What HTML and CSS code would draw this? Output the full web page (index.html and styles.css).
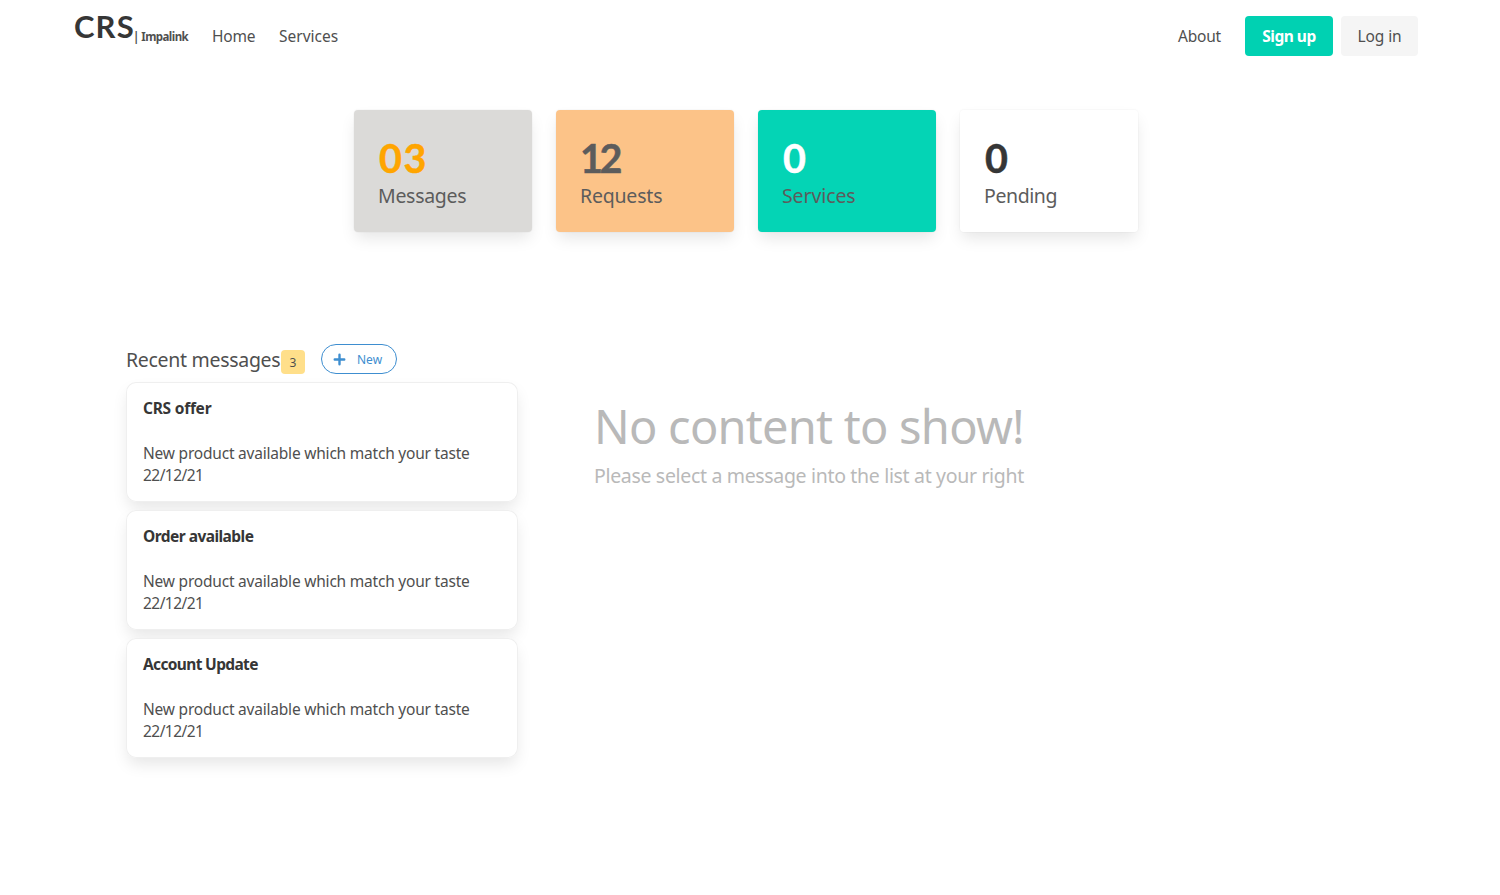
FILE: index.html
```
<!DOCTYPE html>
<html lang="en">
<head>
<meta charset="utf-8">
<title>CRS | Impalink</title>
<link rel="stylesheet" href="styles.css">
</head>
<body>
<nav class="navbar">
  <a class="brand"><span class="brand-name">CRS</span><span class="brand-sub">| Impalink</span></a>
  <a class="link home">Home</a>
  <a class="link services">Services</a>
  <div class="nav-end">
    <a class="link about">About</a>
    <a class="button primary"><span>Sign up</span></a>
    <a class="button light"><span>Log in</span></a>
  </div>
</nav>
<section class="stats">
  <div class="stat grey"><p class="num">03</p><p class="label messages">Messages</p></div>
  <div class="stat orange"><p class="num">12</p><p class="label requests">Requests</p></div>
  <div class="stat teal"><p class="num">0</p><p class="label svc">Services</p></div>
  <div class="stat white"><p class="num">0</p><p class="label pending">Pending</p></div>
</section>
<main class="content">
  <section class="inbox">
    <header class="inbox-head">
      <h2 class="heading">Recent messages</h2><span class="tag">3</span>
      <button class="new"><svg class="plus" viewBox="0 0 12 12"><path d="M6 1.6v8.8M1.6 6h8.8" stroke="currentColor" stroke-width="2.2" stroke-linecap="round"/></svg><span class="new-label">New</span></button>
    </header>
    <article class="card"><h3 class="title offer">CRS offer</h3><p class="text">New product available which match your taste</p><p class="date">22/12/21</p></article>
    <article class="card"><h3 class="title order">Order available</h3><p class="text">New product available which match your taste</p><p class="date">22/12/21</p></article>
    <article class="card"><h3 class="title account">Account Update</h3><p class="text">New product available which match your taste</p><p class="date">22/12/21</p></article>
  </section>
  <section class="empty">
    <h1 class="empty-title">No content to show!</h1>
    <p class="empty-sub">Please select a message into the list at your right</p>
  </section>
</main>
</body>
</html>
```
FILE: styles.css
```
*{box-sizing:border-box;margin:0;padding:0}
body{min-height:895px;font-family:"Noto Sans",sans-serif;font-size:15.5px;color:#4f4f4f;background:#fff}
.navbar{display:flex;align-items:center;height:72px;padding:0 82px 0 74px}
.brand{display:flex;align-items:center;width:114px;margin-right:24px;font-weight:700;white-space:nowrap}
.brand-name{width:59px;font-family:Lato,sans-serif;font-size:31px;line-height:40px;color:#363636;margin-top:-20px;letter-spacing:1.1px}
.brand-sub{font-size:11.5px;line-height:16px;margin-top:2px;letter-spacing:-.55px}
.link{line-height:24px;white-space:nowrap}
.home{width:43px;margin-right:24px;letter-spacing:-.2px}
.nav-end{display:flex;align-items:center;margin-left:auto}
.about{width:43px;margin-right:24px;letter-spacing:-.2px}
.button{display:flex;align-items:center;justify-content:center;height:40px;border-radius:4px;white-space:nowrap}
.primary{width:88px;margin-right:8px;background:#00d1b2;color:#fff;font-weight:700;letter-spacing:-.5px}
.light{width:77px;background:#f5f5f5;letter-spacing:-.1px}
.stats{display:flex;gap:24px;margin:38px 0 0 354px}
.stat{width:178px;height:122px;padding:22px 24px 24px;border-radius:4px;box-shadow:0 8px 16px -2px rgba(10,10,10,.1),0 0 0 1px rgba(10,10,10,.02)}
.num{font-family:Lato,sans-serif;font-size:39.5px;line-height:52px;font-weight:700;-webkit-text-stroke:.5px currentColor;padding-left:1px}
.label{font-size:19.5px;line-height:24px;color:#5c5c5c}
.messages{letter-spacing:-.3px}
.requests{letter-spacing:-.2px}
.svc{letter-spacing:-.1px}
.pending{letter-spacing:-.4px}
.grey{background:#dbdad8}
.grey .num{color:#ffa500;letter-spacing:1.5px}
.orange{background:#fcc388}
.orange .num{color:#5c5c5c;letter-spacing:-3.5px;padding-left:0}
.teal{background:#04d4b5}
.teal .num{color:#fff}
.white .num{color:#363636}
.content{display:flex;margin:112px 0 0 126px}
.inbox{width:392px}
.inbox-head{display:flex;height:38px}
.heading{width:155px;font-size:19.5px;line-height:32px;font-weight:400;white-space:nowrap;letter-spacing:-.3px}
.tag{width:24px;height:24px;margin:6px 16px 0 0;border-radius:4px;background:#ffdf8a;font-size:12px;line-height:25px;text-align:center}
.new{display:flex;align-items:center;width:76px;height:30px;padding-left:11px;border:1px solid #3e8ed0;border-radius:15px;background:#fff;color:#3e8ed0;font:12px "Noto Sans",sans-serif}
.plus{width:13px;height:13px;margin-right:11px}
.card{height:120px;margin-bottom:8px;padding:14px 17px;border-radius:10px;background:#fff;box-shadow:0 8px 16px -2px rgba(10,10,10,.1),inset 0 0 0 1px #efefef}
.title{font-size:15.5px;line-height:24px;margin-bottom:22px;color:#363636}
.offer{letter-spacing:-.25px}
.order{letter-spacing:-.54px}
.account{letter-spacing:-.65px}
.text,.date{line-height:22px;white-space:nowrap}
.text{letter-spacing:-.21px}
.date{letter-spacing:-.55px}
.empty{margin:50px 0 0 76px;color:#b9b9b9}
.empty-title{font-size:47px;line-height:64px;font-weight:400;white-space:nowrap;letter-spacing:-.76px}
.empty-sub{font-size:19.5px;line-height:36px;white-space:nowrap;letter-spacing:-.33px}
```
